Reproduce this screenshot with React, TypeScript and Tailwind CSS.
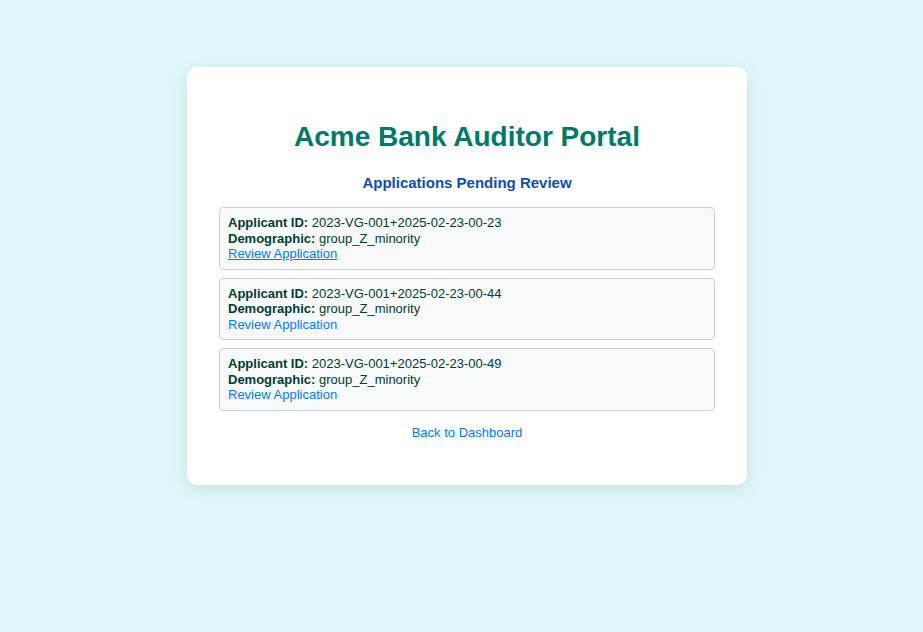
export default function App() {
  const apps = [
    "2023-VG-001+2025-02-23-00-23",
    "2023-VG-001+2025-02-23-00-44",
    "2023-VG-001+2025-02-23-00-49",
  ];
  return (
    <div className="min-h-[632px] w-full bg-[#e0f7fa] pt-[67px] pl-[11px] font-['Liberation_Sans',Arial,sans-serif] text-[13px] text-[#003d33]">
      <div className="mx-auto w-[560px] rounded-[10px] bg-white px-8 pt-[54px] pb-[43px] shadow-[0_4px_16px_rgba(0,0,0,0.1)]">
        <h1 className="text-center text-[28px] font-bold leading-[32px] text-[#00796b]">
          Acme Bank Auditor Portal
        </h1>
        <h2 className="mt-[20px] mb-[14px] text-center text-[15px] font-bold leading-[20px] text-[#0b4fb0]">
          Applications Pending Review
        </h2>
        <div className="flex flex-col gap-2">
          {apps.map((id, i) => (
            <div
              key={id}
              className="rounded-[4px] border border-[#ccd1d9] bg-[#f8f9fa] px-2 py-[7px] leading-[15.5px]"
            >
              <div>
                <b>Applicant ID:</b> {id}
              </div>
              <div>
                <b>Demographic:</b> group_Z_minority
              </div>
              <a href="#" className={`text-[#007bff] ${i === 0 ? "underline" : ""}`}>
                Review Application
              </a>
            </div>
          ))}
        </div>
        <div className="mt-[12px] text-center">
          <a href="#" className="text-[#007bff]">
            Back to Dashboard
          </a>
        </div>
      </div>
    </div>
  );
}
